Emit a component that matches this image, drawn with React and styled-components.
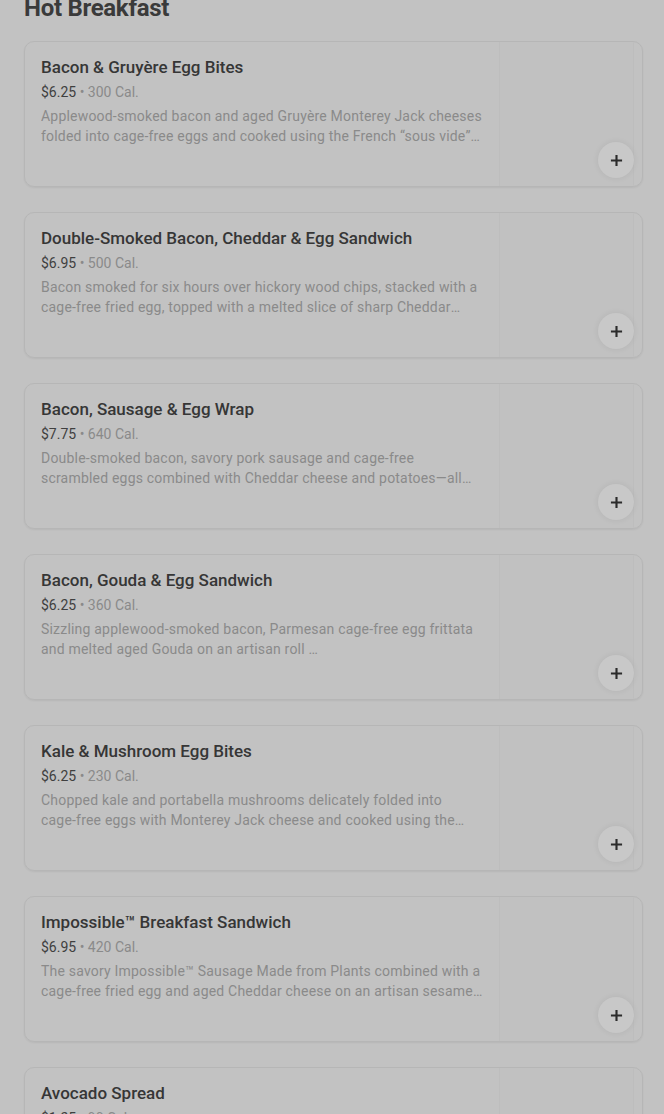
import React from "react";
import styled, { createGlobalStyle } from "styled-components";

const GlobalStyle = createGlobalStyle`
  html, body {
    margin: 0;
    padding: 0;
    background: #c2c2c2;
  }
  body {
    font-family: Roboto, "Liberation Sans", Arial, sans-serif;
    color: #333333;
  }
`;

const items = [
  {
    name: "Bacon & Gruyère Egg Bites",
    price: "$6.25",
    cal: "300 Cal.",
    desc:
      "Applewood-smoked bacon and aged Gruyère Monterey Jack cheeses folded into cage-free eggs and cooked using the French “sous vide” technique—resulting in a velvety texture.",
  },
  {
    name: "Double-Smoked Bacon, Cheddar & Egg Sandwich",
    price: "$6.95",
    cal: "500 Cal.",
    desc:
      "Bacon smoked for six hours over hickory wood chips, stacked with a cage-free fried egg, topped with a melted slice of sharp Cheddar cheese on a croissant bun.",
  },
  {
    name: "Bacon, Sausage & Egg Wrap",
    price: "$7.75",
    cal: "640 Cal.",
    desc:
      "Double-smoked bacon, savory pork sausage and cage-free scrambled eggs combined with Cheddar cheese and potatoes—all wrapped in a warm tortilla.",
  },
  {
    name: "Bacon, Gouda & Egg Sandwich",
    price: "$6.25",
    cal: "360 Cal.",
    desc:
      "Sizzling applewood-smoked bacon, Parmesan cage-free egg frittata and melted aged Gouda on an artisan roll …",
  },
  {
    name: "Kale & Mushroom Egg Bites",
    price: "$6.25",
    cal: "230 Cal.",
    desc:
      "Chopped kale and portabella mushrooms delicately folded into cage-free eggs with Monterey Jack cheese and cooked using the French “sous vide” technique.",
  },
  {
    name: "Impossible™ Breakfast Sandwich",
    price: "$6.95",
    cal: "420 Cal.",
    desc:
      "The savory Impossible™ Sausage Made from Plants combined with a cage-free fried egg and aged Cheddar cheese on an artisan sesame ciabatta bun.",
  },
  {
    name: "Avocado Spread",
    price: "$1.25",
    cal: "90 Cal.",
    desc:
      "Made with Hass avocados, sea salt, onion, garlic and a hint of jalapeño for a creamy, delicious spread.",
  },
];

// keep "cage-free" on one line, as the menu does
const renderDesc = (text) =>
  text.split(/(cage-free)/).map((part, i) =>
    part === "cage-free" ? <NoWrap key={i}>{part}</NoWrap> : part
  );

export default function App() {
  return (
    <>
      <GlobalStyle />
      <Page>
        <Heading>Hot Breakfast</Heading>
        <List>
          {items.map((item) => (
            <Card key={item.name}>
              <Info>
                <Name>{item.name}</Name>
                <Meta>
                  <Price>{item.price}</Price>
                  <Cal> • {item.cal}</Cal>
                </Meta>
                <Desc>{renderDesc(item.desc)}</Desc>
              </Info>
              <Thumb />
              <AddButton aria-label="Add">
                <svg width="13" height="13" viewBox="0 0 14 14">
                  <path
                    d="M7 1v12M1 7h12"
                    stroke="#2b2b2b"
                    strokeWidth="2.3"
                    fill="none"
                  />
                </svg>
              </AddButton>
            </Card>
          ))}
        </List>
      </Page>
    </>
  );
}

const Page = styled.div`
  padding: 0 21px 40px 24px;
`;

const Heading = styled.h2`
  margin: -8px 0 0;
  font-size: 24px;
  line-height: 32px;
  font-weight: 700;
  color: #3a3a3a;
  letter-spacing: -0.3px;
`;

const List = styled.div`
  margin-top: 17px;
  display: flex;
  flex-direction: column;
  gap: 25px;
`;

const Card = styled.div`
  position: relative;
  display: grid;
  grid-template-columns: 1fr 135px;
  column-gap: 16px;
  height: 146px;
  box-sizing: border-box;
  border: 1px solid #b6b6b6;
  border-radius: 10px;
  padding-right: 8px;
  box-shadow: 0 1px 2px rgba(0, 0, 0, 0.06);
  overflow: hidden;
`;

const Info = styled.div`
  padding: 14px 0 0 16px;
  min-width: 0;
`;

const Name = styled.div`
  font-size: 17px;
  line-height: 22px;
  font-weight: 500;
  color: #363636;
`;

const Meta = styled.div`
  margin-top: 4px;
  font-size: 14px;
  line-height: 20px;
`;

const Price = styled.span`
  color: #3f3f3f;
`;

const Cal = styled.span`
  color: #8a8a8a;
`;

const Desc = styled.div`
  margin-top: 4px;
  font-size: 14px;
  line-height: 20px;
  letter-spacing: 0.2px;
  color: #8a8a8a;
  display: -webkit-box;
  -webkit-line-clamp: 2;
  -webkit-box-orient: vertical;
  overflow: hidden;
`;

const NoWrap = styled.span`
  white-space: nowrap;
`;

const Thumb = styled.div`
  background: #c1c1c1;
  border-left: 1px solid #bdbdbd;
  border-right: 1px solid #bdbdbd;
`;

const AddButton = styled.button`
  position: absolute;
  right: 8px;
  bottom: 8px;
  width: 36px;
  height: 36px;
  border: none;
  border-radius: 50%;
  padding: 0;
  background: #c8c8c8;
  box-shadow: 0 0 6px rgba(0, 0, 0, 0.07);
  display: flex;
  align-items: center;
  justify-content: center;
  cursor: pointer;
`;
